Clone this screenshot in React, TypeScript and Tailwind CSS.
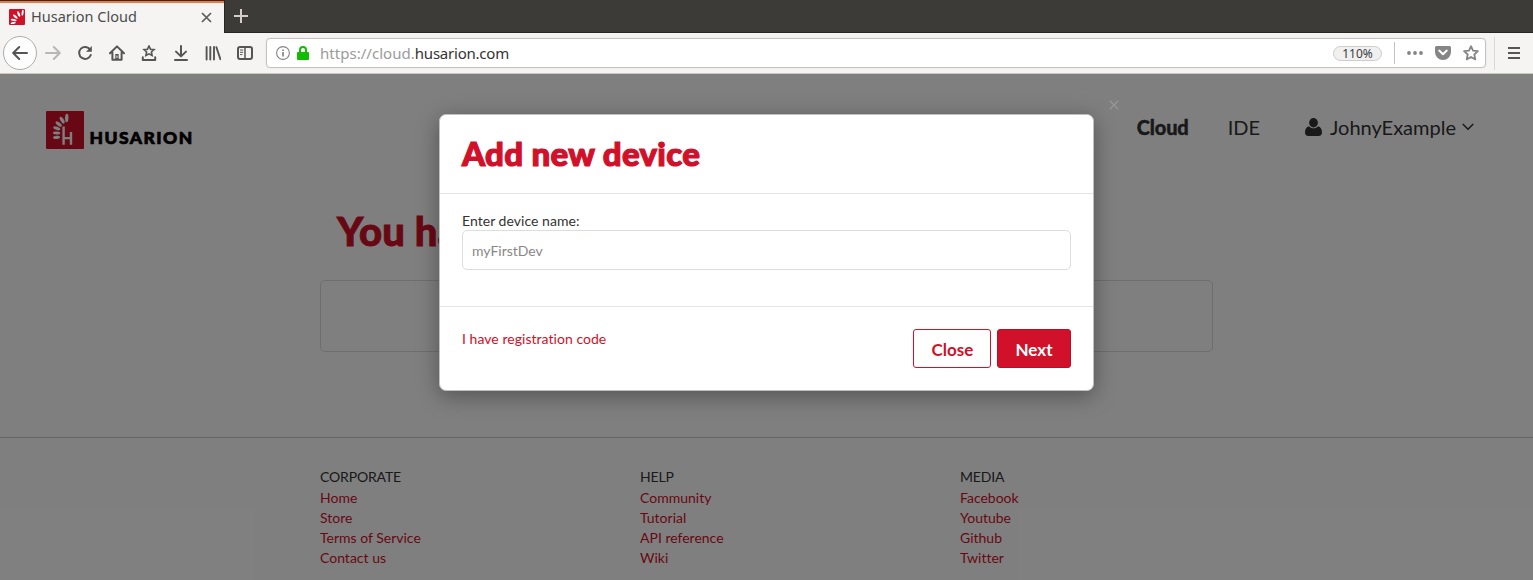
import React from "react";

type IconProps = { children: React.ReactNode; className?: string };

function ToolIcon({ children, className = "text-[#555555]" }: IconProps) {
  return (
    <div className={`flex w-8 shrink-0 items-center justify-center ${className}`}>
      <svg width="16" height="16" viewBox="0 0 16 16" fill="none" stroke="currentColor" strokeWidth="2" strokeLinecap="round" strokeLinejoin="round">
        {children}
      </svg>
    </div>
  );
}

const feathers = [
  [29.5, 10, 12, 2.4, -88],
  [23, 13, 11, 2.4, 60],
  [18, 18.5, 10.5, 2.4, 40],
  [15.3, 24.6, 10.5, 2.3, 20],
  [15, 31.2, 10.5, 2.2, 3],
  [15, 37.5, 10, 2.2, -6],
];

function Favicon() {
  return (
    <svg width="16" height="16" viewBox="0 0 16 16" className="shrink-0">
      <rect width="16" height="16" rx="1" fill="#d1102a" />
      <g fill="#fff">
        <ellipse cx="13.6" cy="3.8" rx="1" ry="3" transform="rotate(8 13.6 3.8)" />
        <ellipse cx="9.7" cy="5" rx="1.1" ry="3" transform="rotate(-22 9.7 5)" />
        <ellipse cx="6.3" cy="7.6" rx="1.1" ry="3" transform="rotate(-50 6.3 7.6)" />
        <ellipse cx="4.7" cy="11" rx="3" ry="1.1" transform="rotate(12 4.7 11)" />
        <ellipse cx="4.3" cy="14" rx="2.7" ry="0.9" transform="rotate(-8 4.3 14)" />
      </g>
    </svg>
  );
}

function BrowserChrome() {
  return (
    <div className="font-['Noto_Sans',sans-serif]">
      <div className="flex h-[33px] bg-[#3c3b37]">
        <div className="flex w-[224px] items-center border-t border-[#2d2c29] bg-[#f5f4f2] pl-[9px] shadow-[inset_0_2px_0_#f07746]">
          <Favicon />
          <span className="ml-[6px] pb-[2px] text-[14.5px] leading-4 tracking-[0.02px] text-[#4c4c4c]">Husarion Cloud</span>
          <svg className="mr-[12px] ml-auto" width="11" height="11" viewBox="0 0 11 11" stroke="#5b5b5b" strokeWidth="1.7">
            <path d="M1 1l9 9M10 1l-9 9" />
          </svg>
        </div>
        <div className="flex flex-1 items-center border-b border-l border-[#272623] pl-[9px]">
          <svg width="14" height="14" viewBox="0 0 14 14" stroke="#d3cdcb" strokeWidth="2">
            <path d="M7 0v14M0 7h14" />
          </svg>
        </div>
      </div>
      <div className="flex h-[41px] items-center border-b border-[#c9c8c5] bg-[#f5f4f2] pl-[3px]">
        <div className="flex size-[34px] shrink-0 items-center justify-center rounded-full border border-[#adadab] bg-[#fdfdfd] text-[#555555]">
          <svg width="16" height="16" viewBox="0 0 16 16" fill="none" stroke="currentColor" strokeWidth="2" strokeLinecap="round" strokeLinejoin="round">
            <path d="M15 8H1.5M7.2 2L1.2 8l6 6" />
          </svg>
        </div>
        <ToolIcon className="text-[#b7b7b5]">
          <path d="M1 8h13.5M8.8 2l6 6-6 6" />
        </ToolIcon>
        <ToolIcon>
          <path d="M13.2 4.6A6 6 0 1 0 13.8 10" />
          <path d="M14.8 1v5.8H9z" fill="currentColor" stroke="none" />
        </ToolIcon>
        <ToolIcon>
          <path d="M1 8.2L8 1.4l7 6.8M3.4 7.5v7.3h9.2V7.5" />
          <path d="M6.3 9h3.4v5.8H6.3z" fill="currentColor" stroke="none" />
          <path d="M8 11v1.5" stroke="#f5f4f2" strokeWidth="1" />
        </ToolIcon>
        <ToolIcon>
          <path d="M8 1l1.5 3.2 3.5.4-2.6 2.4.7 3.5L8 8.8l-3.1 1.7.7-3.5L3 4.6l3.5-.4z" strokeWidth="1.6" strokeLinejoin="miter" />
          <path d="M1.8 12.3V15h12.4v-2.7" />
        </ToolIcon>
        <ToolIcon>
          <path d="M8 1v10M3 6.6l5 4.8 5-4.8M2 15h12" />
        </ToolIcon>
        <ToolIcon>
          <path d="M1.6 2v12.5M5.3 2v12.5M9 2v12.5M11.4 2.2l4 12" strokeWidth="1.9" />
        </ToolIcon>
        <ToolIcon>
          <rect x="1" y="2" width="14" height="12" rx="2" />
          <path d="M8 2v12" strokeWidth="1.5" />
          <path d="M3.4 5h2.4M3.4 7.3h2.4M3.4 9.6h1.6" strokeWidth="1" />
        </ToolIcon>
        <div className="ml-[5px] flex h-[30px] w-[1220px] shrink-0 items-center rounded-[4px] border border-[#c4c2be] bg-white pr-[6px] pl-[9px] shadow-[0_0_2px_rgba(0,0,0,0.08)]">
          <svg width="14" height="14" viewBox="0 0 14 14" fill="none" stroke="#858585" strokeWidth="1.1">
            <circle cx="7" cy="7" r="6.4" />
            <path d="M7 6v4.5M7 3.4v1.5" strokeWidth="1.7" />
          </svg>
          <svg className="ml-[7px]" width="12" height="14" viewBox="0 0 12 14">
            <path d="M3 7V4a3 3 0 0 1 6 0v3" fill="none" stroke="#12bc00" strokeWidth="2" />
            <rect y="6" width="12" height="8" rx="1" fill="#12bc00" />
          </svg>
          <span className="ml-[11px] text-[15px] leading-5 tracking-[0.03px] text-[#9b9b9b]">
            https://cloud.<span className="tracking-[-0.22px] text-[#333333]">husarion.com</span>
          </span>
          <span className="ml-auto flex h-[15px] w-[49px] items-center justify-center rounded-full border border-[#cfcdca] bg-[#f0f0f0] pt-px text-[12px] leading-none text-[#3c3c3c]">110%</span>
          <span className="ml-[12px] h-[22px] w-px bg-[#c4c2be]" />
          <svg className="ml-[12px]" width="16" height="4" viewBox="0 0 16 4" fill="#858585">
            <circle cx="2" cy="2" r="1.9" />
            <circle cx="8" cy="2" r="1.9" />
            <circle cx="14" cy="2" r="1.9" />
          </svg>
          <svg className="ml-[12px]" width="16" height="14" viewBox="0 0 16 14">
            <path d="M1.5 0h13A1.5 1.5 0 0 1 16 1.5V6A8 8 0 0 1 0 6V1.5A1.5 1.5 0 0 1 1.5 0z" fill="#858585" />
            <path d="M4.2 4.6L8 8.2l3.8-3.6" fill="none" stroke="#fff" strokeWidth="2" strokeLinecap="round" strokeLinejoin="round" />
          </svg>
          <svg className="ml-[12px]" width="16" height="16" viewBox="0 0 16 16" fill="none" stroke="#858585" strokeWidth="1.8" strokeLinejoin="round">
            <path d="M8 1.2l2 4.4 4.9.6-3.6 3.3 1 4.9L8 12l-4.3 2.4 1-4.9L1.1 6.2 6 5.6z" />
          </svg>
        </div>
        <span className="ml-[8px] h-[33px] w-px bg-[#d9d8d5]" />
        <svg className="ml-[13px]" width="12" height="12" viewBox="0 0 12 12" stroke="#555555" strokeWidth="2">
          <path d="M0 1h12M0 6h12M0 11h12" />
        </svg>
      </div>
    </div>
  );
}

function Logo() {
  return (
    <div className="flex items-end pt-[3px]">
      <svg width="38" height="38" viewBox="0 0 54 54">
        <rect width="54" height="54" rx="1.5" fill="#d1102a" />
        <g fill="#fff">
          {feathers.map(([cx, cy, len, r, deg]) => (
            <ellipse key={cy} cx={cx} cy={cy} rx={len / 2} ry={r} transform={`rotate(${deg} ${cx} ${cy})`} />
          ))}
        </g>
        <path d="M25 22v26M35.5 30v18M25 38.5H35.5" stroke="#fff" strokeWidth="3.4" fill="none" />
      </svg>
      <svg className="ml-[5px]" width="106" height="28" viewBox="0 0 106 28">
        <text x="0.6" y="23.3" textLength="104" lengthAdjust="spacingAndGlyphs" letterSpacing="1.4" fontFamily="Lato, sans-serif" fontWeight="900" fontSize="17" fill="#000" stroke="#000" strokeWidth="0.7">HUSARION</text>
      </svg>
    </div>
  );
}

const columns = [
  { title: "CORPORATE", links: ["Home", "Store", "Terms of Service", "Contact us"] },
  { title: "HELP", links: ["Community", "Tutorial", "API reference", "Wiki"] },
  { title: "MEDIA", links: ["Facebook", "Youtube", "Github", "Twitter"] },
];

function CloudPage() {
  return (
    <div className="flex h-full flex-col bg-white text-[#333333]">
      <header className="flex h-[108px] shrink-0 items-center justify-between pr-[59px] pl-[46px]">
        <Logo />
        <nav className="flex items-center pb-[3px] text-[20px] leading-7">
          <span className="font-black tracking-[-0.15px] [-webkit-text-stroke:0.4px_currentColor]">Cloud</span>
          <span className="ml-[39px]">IDE</span>
          <svg className="ml-[45px]" width="17" height="18" viewBox="0 0 17 18" fill="currentColor">
            <ellipse cx="8.5" cy="4.7" rx="4.4" ry="4.7" />
            <path d="M4 8.2C1.2 8.7 0 11.4 0 14.5 0 16.6 1.3 18 3.2 18h10.6c1.9 0 3.2-1.4 3.2-3.5 0-3.1-1.2-5.8-4-6.3C11.8 9.5 10.3 10.3 8.5 10.3S5.2 9.500 4 8.200z" />
          </svg>
          <span className="ml-[8px]">JohnyExample</span>
          <svg className="mt-px ml-[6px]" width="12" height="8" viewBox="0 0 12 8" fill="none" stroke="currentColor" strokeWidth="1.6">
            <path d="M.8 1l5.2 5.2L11.2 1" />
          </svg>
        </nav>
      </header>
      <main className="mx-auto h-[255px] w-[893px] shrink-0 pt-[23px]">
        <h1 className="pl-[17px] text-[40px] leading-[52px] font-black tracking-[0.2px] text-[#d1102a] [-webkit-text-stroke:0.9px_currentColor]">You ha</h1>
        <div className="mt-[23px] h-[72px] rounded-[5px] border border-[#dddddd]" />
      </main>
      <footer className="flex-1 border-t border-[#cccccc] pt-[29px] pl-[320px] text-[14px] leading-5">
        <div className="flex">
          {columns.map((c) => (
            <div key={c.title} className="w-80">
              <div className="h-[21px] tracking-[-0.15px]">{c.title}</div>
              {c.links.map((l) => (
                <div key={l} className="text-[#d1102a]">{l}</div>
              ))}
            </div>
          ))}
        </div>
      </footer>
    </div>
  );
}

function AddDeviceDialog() {
  return (
    <div className="flex w-[655px] flex-col rounded-[7px] border border-[#c0c0c0] bg-white text-[14px] leading-5 text-[#333333] shadow-[0_5px_22px_rgba(0,0,0,0.35)]">
      <div className="h-[79px] border-b border-[#e5e5e5] px-[22px] pt-[18px]">
        <h2 className="text-[33px] leading-[40px] font-black tracking-[0.3px] text-[#d1102a] [-webkit-text-stroke:1.2px_currentColor]">Add new device</h2>
      </div>
      <div className="h-[112px] px-[22px] pt-[17px]">
        <div className="tracking-[0.04px]">Enter device name:</div>
        <div className="mt-[-1px] flex h-10 items-center rounded-[5px] border border-[#dddddd] px-[9px] pt-px text-[#888888]">myFirstDev</div>
      </div>
      <div className="flex h-[84px] items-start border-t border-[#e5e5e5] px-[22px] pt-[22px] text-[#d1102a]">
        <span className="tracking-[0.04px]">I have registration code</span>
        <button className="ml-auto h-[39px] w-[78px] rounded-[3px] border border-[#d1102a] pt-[3px] pl-px text-[17px] font-bold">Close</button>
        <button className="ml-[6px] h-[39px] w-[74px] rounded-[3px] border border-[#b90e25] bg-[#d1102a] pt-[3px] text-[17px] font-bold text-white">Next</button>
      </div>
    </div>
  );
}

export default function App() {
  return (
    <div className="flex h-[580px] w-[1533px] flex-col overflow-hidden">
      <BrowserChrome />
      <div className="relative min-h-0 flex-1 font-['Lato',sans-serif] [font-variant-ligatures:none]">
        <CloudPage />
        <div className="absolute inset-0 flex items-start justify-center bg-black/50 pt-[40px]">
          <div className="relative">
            <AddDeviceDialog />
            <svg className="absolute top-[-14px] right-[-25px]" width="10" height="10" viewBox="0 0 10 10" stroke="#9b9b9b" strokeWidth="1.2">
              <path d="M.7.7l8.6 8.6M9.3.7L.7 9.3" />
            </svg>
          </div>
        </div>
      </div>
    </div>
  );
}
